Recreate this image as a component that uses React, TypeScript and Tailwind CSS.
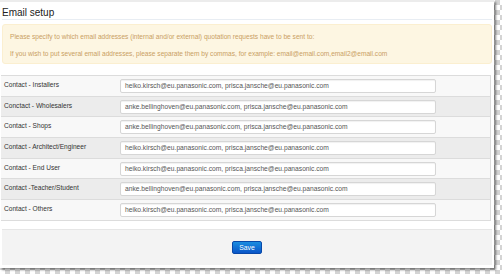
const rows = [
  { label: 'Contact - Installers', value: 'heiko.kirsch@eu.panasonic.com, prisca.jansche@eu.panasonic.com' },
  { label: 'Conctact - Wholesalers', value: 'anke.bellinghoven@eu.panasonic.com, prisca.jansche@eu.panasonic.com' },
  { label: 'Contact - Shops', value: 'anke.bellinghoven@eu.panasonic.com, prisca.jansche@eu.panasonic.com' },
  { label: 'Contact - Architect/Engineer', value: 'heiko.kirsch@eu.panasonic.com, prisca.jansche@eu.panasonic.com' },
  { label: 'Contact - End User', value: 'heiko.kirsch@eu.panasonic.com, prisca.jansche@eu.panasonic.com' },
  { label: 'Contact -Teacher/Student', value: 'anke.bellinghoven@eu.panasonic.com, prisca.jansche@eu.panasonic.com' },
  { label: 'Contact - Others', value: 'heiko.kirsch@eu.panasonic.com, prisca.jansche@eu.panasonic.com' },
];

export default function App() {
  return (
    <div className="w-[502px] h-[274px] overflow-hidden bg-[repeating-conic-gradient(#d4d4d4_0_25%,#ffffff_0_50%)] bg-[length:10px_10px] font-['Liberation_Sans',Arial,sans-serif]">
      <div className="w-[494px] h-[268px] bg-white border-t-2 border-[#ececec] shadow-[2px_2px_2px_rgba(0,0,0,0.45)] flex flex-col">
        <h1 className="h-[18px] mx-[2px] pt-[6px] text-[10px] leading-[10px] text-[#222] border-b border-[#e8edf3]">
          Email setup
        </h1>

        <div className="mt-[4px] mx-[2px] h-[40px] rounded-[3px] bg-[#fdf6e2] border border-[#fbefd0] px-[7px] pt-[8px] text-[6.6px] leading-[7px] text-[#c9a062]">
          <p>Please specify to which email addresses (internal and/or external) quotation requests have to be sent to:</p>
          <p className="mt-[10px]">If you wish to put several email addresses, please separate them by commas, for example: email@email.com,email2@email.com</p>
        </div>

        <div className="mt-[11px] ml-[1px] w-[490px] border-t border-r border-[#dcdcdc]">
          {rows.map((row, i) => (
            <div
              key={row.label}
              className={`h-[20.7px] flex border-b border-[#dcdcdc] ${i % 2 === 0 ? 'bg-[#f8f8f8]' : 'bg-[#ececec]'}`}
            >
              <div className="w-[119px] pl-[3px] pt-[5px] text-[6.6px] leading-[8px] text-[#333]">{row.label}</div>
              <div className="pt-[3px]">
                <div className="w-[316px] h-[14px] bg-white border border-[#d6d6d6] rounded-[2px] pl-[4px] text-[6.7px] leading-[12px] text-[#555] shadow-[inset_0_1px_1px_rgba(0,0,0,0.06)]">
                  {row.value}
                </div>
              </div>
            </div>
          ))}
        </div>

        <div className="mt-[8px] mx-[2px] h-[36px] bg-[#f3f3f3] border-t border-[#e6e6e6] flex items-center justify-center">
          <button className="w-[30px] h-[13px] rounded-[2px] bg-[linear-gradient(#1a8de0,#0a55c8)] border border-[#0848a8] text-white text-[6.8px] leading-[11px]">
            Save
          </button>
        </div>
      </div>
    </div>
  );
}
